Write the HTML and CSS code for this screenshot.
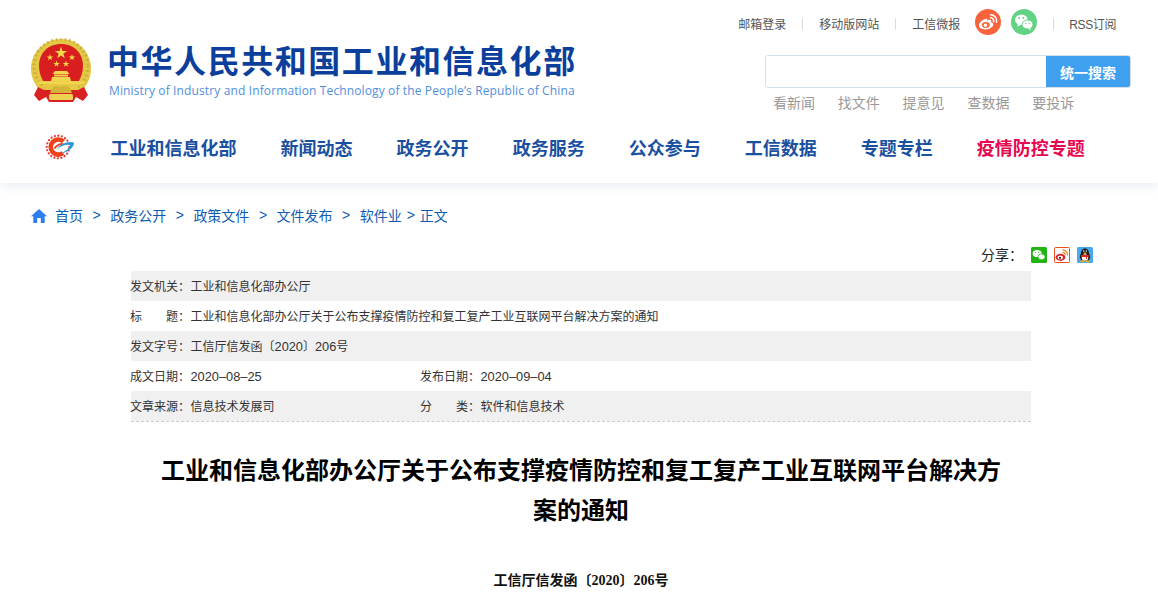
FILE: index.html
```html
<!DOCTYPE html>
<html lang="zh-CN">
<head>
    <meta charset="UTF-8" />
    <title>工业和信息化部办公厅关于公布支撑疫情防控和复工复产工业互联网平台解决方案的通知</title>
    <link rel="stylesheet" href="styles.css">
</head>
<body>
<div class="top-area">
    <div class="header">
        <div class="brand">
            <svg class="emblem" width="62" height="65" viewBox="0 0 62 65">
                <defs>
                    <polygon id="star" points="0,-1 .225,-.31 .95,-.31 .36,.12 .59,.81 0,.38 -.59,.81 -.36,.12 -.95,-.31 -.225,-.31" fill="#f6d94a"/>
                </defs>
                <path d="M31 1 C48 1 61 14 61 31 C61 41 56 49 49 55 H13 C6 49 1 41 1 31 C1 14 14 1 31 1Z" fill="#e3c845"/>
                <circle cx="31" cy="28" r="27" fill="none" stroke="#b59a2c" stroke-width="3" stroke-dasharray="1.500 3" opacity=".6"/>
                <path d="M31 6 C44 6 53 15 53 28 C53 34 51 39 49 43 H13 C11 39 9 34 9 28 C9 15 18 6 31 6Z" fill="#d81e1e"/>
                <use href="#star" transform="translate(31 15) scale(6.500)"/>
                <use href="#star" transform="translate(20 19.500) scale(3.500)"/>
                <use href="#star" transform="translate(42 19.500) scale(3.500)"/>
                <use href="#star" transform="translate(26.500 26) scale(3.500)"/>
                <use href="#star" transform="translate(36 26) scale(3.500)"/>
                <path d="M25 33 H37 L39.500 36 H22.500 Z M24 36.500 H38 V38.500 H24 Z M22 39 H40 L41 43 H21 Z" fill="#f2d650"/>
                <path d="M8 43.500 H54 V46 H8 Z" fill="#f2d650"/>
                <path d="M8 49 L14 52 H48 L54 49 L58 57 L53 63 L46 59 L43 64 H19 L16 59 L9 63 L4 57 Z" fill="#d92121"/>
                <path d="M13 46 H49 L46 52 H16 Z" fill="#e6c845"/>
                <path d="M22 50 Q26 46 31 49 Q36 46 40 50 L42 55 H20 Z" fill="#d4b53a"/>
                <rect x="19" y="56" width="24" height="6" rx="1.500" fill="#ecd152"/>
            </svg>
            <div class="brand-text">
                <div class="brand-cn">中华人民共和国工业和信息化部</div>
                <div class="brand-en">Ministry of Industry and Information Technology of the People’s Republic of China</div>
            </div>
        </div>
        <div class="header-right">
            <div class="top-links">
                <a href="#">邮箱登录</a>
                <span class="sep"></span>
                <a href="#">移动版网站</a>
                <span class="sep"></span>
                <a href="#">工信微报</a>
                <svg class="round-icon weibo-icon" width="26" height="26" viewBox="0 0 26 26">
                    <circle cx="13" cy="13" r="13" fill="#f9633c"/>
                    <path d="M11 9.800c-3.600 1-7 3.800-7 6.700 0 2.500 3 3.900 6.500 3.900 4.300 0 7.800-2.300 7.800-4.800 0-1.400-1.200-2-2.300-2.300.6-1.400 0-2.400-1.600-2.500-1 0-2.300.5-2.300.5.300-1.400-.3-1.800-1.100-1.500z" fill="#fff"/>
                    <ellipse cx="10.800" cy="16" rx="4" ry="3" fill="#f9633c"/>
                    <circle cx="10.400" cy="16.200" r="1.700" fill="#fff"/>
                    <path d="M15.500 5.800a6 6 0 0 1 6 7.300M15.500 8.800a3.100 3.100 0 0 1 3.100 3.900" fill="none" stroke="#fff" stroke-width="1.600" stroke-linecap="round"/>
                </svg>
                <svg class="round-icon wechat-icon" width="26" height="26" viewBox="0 0 26 26">
                    <circle cx="13" cy="13" r="13" fill="#62d283"/>
                    <ellipse cx="10.300" cy="10.800" rx="6.300" ry="5.200" fill="#fff"/>
                    <path d="M7 14.500 L6.300 17.800 L10 15.500 Z" fill="#fff"/>
                    <ellipse cx="16.500" cy="15.500" rx="5.500" ry="4.500" fill="#fff" stroke="#62d283" stroke-width="1"/>
                    <path d="M19 18.800 L20 21 L17 19.800 Z" fill="#fff"/>
                    <circle cx="8.200" cy="9" r=".9" fill="#62d283"/>
                    <circle cx="12.400" cy="9" r=".9" fill="#62d283"/>
                    <circle cx="14.800" cy="14.500" r=".7" fill="#62d283"/>
                    <circle cx="18.200" cy="14.500" r=".7" fill="#62d283"/>
                </svg>
                <span class="sep"></span>
                <a href="#" class="rss-link">RSS订阅</a>
            </div>
            <div class="search-box">
                <input class="search-input" type="text">
                <button class="search-btn">统一搜索</button>
            </div>
            <div class="hot-links">
                <a href="#">看新闻</a>
                <a href="#">找文件</a>
                <a href="#">提意见</a>
                <a href="#">查数据</a>
                <a href="#">要投诉</a>
            </div>
        </div>
    </div>
    <div class="nav">
        <svg class="nav-logo" width="30" height="26" viewBox="0 0 30 26">
            <circle cx="13" cy="13" r="11.300" fill="none" stroke="#e8322a" stroke-width="2.200" stroke-linecap="round" stroke-dasharray="0 3.550"/>
            <path d="M18.500 7.500 A7.600 7.600 0 1 0 18 19" fill="none" stroke="#f2401a" stroke-width="4.600"/>
            <path d="M9.500 14.500 C12 10.500 16 9.500 18.500 10.500" fill="none" stroke="#f2401a" stroke-width="2"/>
            <path d="M12 15 C15 10 23 6.500 29 8.500 C29.500 13 23 18.500 16 19.500 C21 17 24.500 14 25 11 C21 10 16 12 12 15Z" fill="#2a9ad8"/>
        </svg>
        <ul class="nav-list">
            <li><a href="#">工业和信息化部</a></li>
            <li><a href="#">新闻动态</a></li>
            <li><a href="#">政务公开</a></li>
            <li><a href="#">政务服务</a></li>
            <li><a href="#">公众参与</a></li>
            <li><a href="#">工信数据</a></li>
            <li><a href="#">专题专栏</a></li>
            <li><a href="#" class="nav-hot">疫情防控专题</a></li>
        </ul>
    </div>
</div>
<div class="crumbs">
    <svg class="home-icon" width="16" height="14" viewBox="0 0 16 14">
        <path d="M8 0 L16 7.300 H13.700 V14 H9.800 V9 H6.200 V14 H2.300 V7.300 H0 Z" fill="#2d7ff0"/>
    </svg>
    <a href="#">首页</a><span class="gt">&gt;</span>
    <a href="#">政务公开</a><span class="gt">&gt;</span>
    <a href="#">政策文件</a><span class="gt">&gt;</span>
    <a href="#">文件发布</a><span class="gt">&gt;</span>
    <a href="#">软件业</a><span class="gt gt-small">&gt;</span>
    <a href="#">正文</a>
</div>
<div class="share">
    <span class="share-label">分享：</span>
    <svg class="share-icon" width="16" height="16" viewBox="0 0 16 16">
        <rect width="16" height="16" rx="1.500" fill="#22b512"/>
        <ellipse cx="6.200" cy="6.500" rx="4.500" ry="3.600" fill="#fff"/>
        <ellipse cx="10.500" cy="9.800" rx="3.600" ry="2.900" fill="#fff" stroke="#22b512" stroke-width=".7"/>
        <circle cx="4.700" cy="5.500" r=".6" fill="#22b512"/>
        <circle cx="7.700" cy="5.500" r=".6" fill="#22b512"/>
    </svg>
    <svg class="share-icon" width="16" height="16" viewBox="0 0 16 16">
        <rect x=".5" y=".5" width="15" height="15" rx="1" fill="#fff" stroke="#e8501c"/>
        <ellipse cx="6.500" cy="10.300" rx="4.800" ry="3.600" fill="#d8232a"/>
        <ellipse cx="6.300" cy="10.600" rx="2.700" ry="2" fill="#fff"/>
        <circle cx="6" cy="10.800" r="1.100" fill="#222"/>
        <path d="M8.500 3a4.800 4.800 0 0 1 5 5.500M8.500 5.300a2.500 2.500 0 0 1 2.700 3" fill="none" stroke="#f08a1d" stroke-width="1.300"/>
    </svg>
    <svg class="share-icon" width="16" height="16" viewBox="0 0 16 16">
        <rect width="16" height="16" rx="1.500" fill="#4aa8ec"/>
        <path d="M8 1.500 C11 1.500 12 4 12 6.500 C13.500 9 13.500 11 12.500 11.500 L12 14 H4 L3.500 11.500 C2.500 11 2.500 9 4 6.500 C4 4 5 1.500 8 1.500Z" fill="#1c1c1c"/>
        <ellipse cx="8" cy="10.500" rx="3.200" ry="3.300" fill="#fff"/>
        <path d="M4.200 8 H11.800 L12 10 L10 10 V12 H9 V10 H4 Z" fill="#e02a20"/>
        <path d="M6 6 L8 5.200 L10 6 L8 7.300 Z" fill="#f4b21c"/>
        <circle cx="6.700" cy="4" r=".7" fill="#fff"/>
        <circle cx="9.300" cy="4" r=".7" fill="#fff"/>
        <ellipse cx="5.300" cy="14.300" rx="2.200" ry="1" fill="#f4b21c"/>
        <ellipse cx="10.700" cy="14.300" rx="2.200" ry="1" fill="#f4b21c"/>
    </svg>
</div>
<div class="content">
    <div class="info">
        <div class="info-row">
            <span class="info-label">发文机关：</span><span>工业和信息化部办公厅</span>
        </div>
        <div class="info-row">
            <span class="info-label label-wide">标<i></i>题：</span><span>工业和信息化部办公厅关于公布支撑疫情防控和复工复产工业互联网平台解决方案的通知</span>
        </div>
        <div class="info-row">
            <span class="info-label">发文字号：</span><span>工信厅信发函〔<span class="num">2020</span>〕<span class="num">206</span>号</span>
        </div>
        <div class="info-row">
            <div class="info-half"><span class="info-label">成文日期：</span><span class="num">2020–08–25</span></div>
            <div class="info-half"><span class="info-label">发布日期：</span><span class="num">2020–09–04</span></div>
        </div>
        <div class="info-row">
            <div class="info-half"><span class="info-label">文章来源：</span><span>信息技术发展司</span></div>
            <div class="info-half"><span class="info-label label-wide">分<i></i>类：</span><span>软件和信息技术</span></div>
        </div>
    </div>
    <h1 class="title">工业和信息化部办公厅关于公布支撑疫情防控和复工复产工业互联网平台解决方案的通知</h1>
    <p class="doc-no">工信厅信发函〔2020〕206号</p>
</div>
</body>
</html>
```
FILE: styles.css
```css
* {
    box-sizing: border-box;
}
html, body {
    height: 605px;
    overflow: hidden;
}
body {
    margin: 0;
    background: #fff;
    font-family: "Liberation Sans", "Noto Sans CJK SC", sans-serif;
    color: #333;
}
a {
    color: inherit;
    text-decoration: none;
}
.top-area {
    height: 183px;
    box-shadow: 0 2px 10px rgba(90, 120, 170, 0.16);
}
.header {
    display: flex;
    justify-content: space-between;
    height: 122px;
    padding: 0 27px 0 30px;
}
.brand {
    display: flex;
    align-items: flex-start;
    padding-top: 38px;
}
.emblem {
    margin-right: 17px;
}
.brand-text {
    padding-top: 6px;
}
.brand-cn {
    margin-left: -2px;
    font-size: 32px;
    line-height: 36px;
    font-weight: 700;
    letter-spacing: 1.550px;
    color: #0b3f9b;
    white-space: nowrap;
}
.brand-en {
    font-family: "Open Sans", sans-serif;
    font-size: 12px;
    line-height: 18px;
    margin-top: 2px;
    letter-spacing: 0.125px;
    color: #4f8fdc;
    white-space: nowrap;
}
.header-right {
    width: 366px;
    display: flex;
    flex-direction: column;
}
.top-links {
    display: flex;
    align-items: center;
    justify-content: flex-end;
    height: 47px;
    margin: 0 15px 8px -60px;
    font-size: 12px;
    color: #555;
}
.sep {
    width: 1px;
    height: 12px;
    margin: 0 16px;
    background: #ddd;
}
.rss-link {
    margin-left: -1px;
    letter-spacing: -0.400px;
}
.round-icon {
    margin-left: 15px;
    margin-bottom: 3px;
}
.weibo-icon + .wechat-icon {
    margin-left: 10px;
}
.search-box {
    display: flex;
    height: 33px;
    border: 1px solid #d5dfea;
    border-radius: 3px;
    overflow: hidden;
}
.search-input {
    flex: 1;
    min-width: 0;
    border: none;
    outline: none;
}
.search-btn {
    width: 84px;
    border: none;
    background: #3fa0f0;
    color: #fff;
    font-family: inherit;
    font-size: 14px;
    font-weight: 700;
}
.hot-links {
    display: flex;
    gap: 22.800px;
    padding-left: 8px;
    margin-top: 5px;
    font-size: 14px;
    line-height: 20px;
    color: #999;
}
.nav {
    display: flex;
    align-items: center;
    height: 54px;
    padding: 0 0 4px 45px;
}
.nav-logo {
    flex: none;
    margin-right: 35.500px;
}
.nav-list {
    display: flex;
    gap: 44.050px;
    margin: 0;
    padding: 0;
    list-style: none;
    font-size: 18px;
    font-weight: 700;
    color: #1a50a0;
}
.nav-hot {
    color: #e6074f;
}
.crumbs {
    display: flex;
    align-items: center;
    height: 20px;
    margin-top: 23px;
    padding: 0 0 2px 31px;
    font-size: 14px;
    color: #0e5cb0;
}
.home-icon {
    flex: none;
    margin: 2px 8px 0 0;
}
.gt {
    width: 27.200px;
    text-align: center;
}
.gt-small {
    width: 18px;
}
.share {
    display: flex;
    align-items: center;
    height: 20px;
    margin-top: 19px;
    padding-left: 981px;
    font-size: 14px;
    color: #222;
}
.share-label {
    width: 50px;
    padding-bottom: 2px;
}
.share-icon {
    margin-right: 7px;
}
.content {
    width: 900px;
    margin: 6px 0 0 131px;
}
.info {
    font-size: 12px;
    color: #333;
    border-bottom: 1px dashed #ccc;
}
.info-row {
    display: flex;
    align-items: center;
    height: 30px;
    padding-bottom: 2px;
}
.info-row:nth-child(odd) {
    background: #f0f0f0;
}
.info-half {
    width: 290px;
}
.info-label {
    display: inline-block;
    width: 60px;
    margin-left: -1px;
    margin-right: 0.500px;
}
.label-wide {
    display: inline-flex;
}
.label-wide i {
    flex: 1;
}
.num {
    font-size: 12.800px;
}
.title {
    margin: 29px 0 0;
    padding: 0 30px;
    font-size: 24px;
    line-height: 40px;
    font-weight: 700;
    color: #000;
    text-align: center;
}
.doc-no {
    margin: 40px 0 0;
    font-family: "Liberation Serif", "Noto Sans CJK SC", serif;
    font-size: 14px;
    line-height: 20px;
    font-weight: 700;
    color: #111;
    text-align: center;
}
```
